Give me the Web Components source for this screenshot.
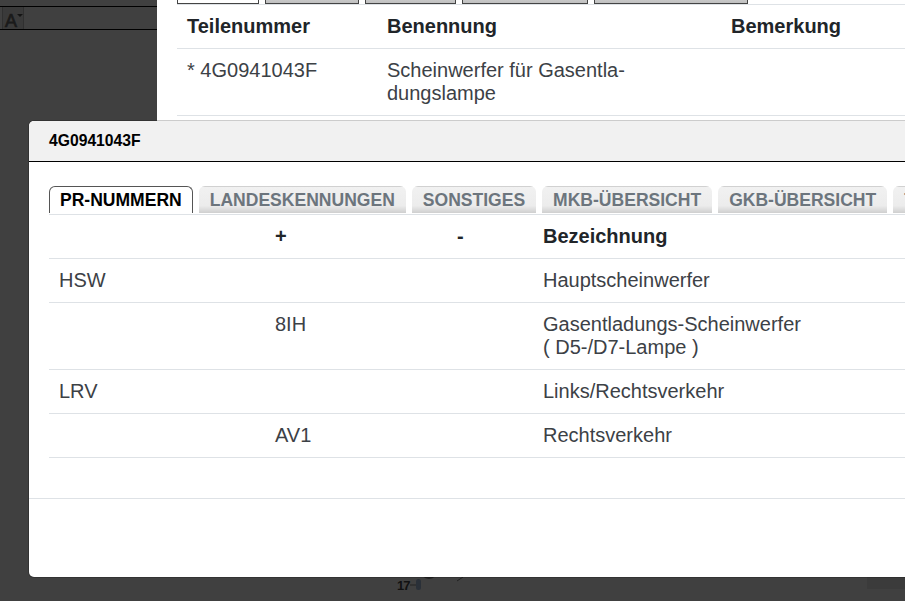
<!DOCTYPE html>
<html><head><meta charset="utf-8">
<style>
html,body{margin:0;padding:0;height:100%;overflow:hidden}
body{background:#404040;font-family:"Liberation Sans",Arial,sans-serif}
</style></head><body>
<template id="t-page"><style>
:host{display:grid;grid-template-columns:157px 1fr;grid-template-rows:121px 1fr;width:905px;height:601px;position:relative;overflow:hidden;background:#404040}
.main{background:#fff;padding:0 0 0 20px;overflow:hidden}
</style><app-toolbar></app-toolbar><div class="main"><slot name="main"></slot></div><slot name="decor"></slot><slot name="modal"></slot></template>

<template id="t-toolbar"><style>
:host{display:block}
.bar{margin-top:6px;height:22px;border-top:1px solid #000;border-bottom:1px solid #000;display:flex}
.btn{width:22px;height:22px;border:1px solid #303030;border-width:0 1px;margin-left:2px;background:#3a3a3a;position:relative;color:#1a1a1a;font:18px/28px "Liberation Sans",sans-serif;-webkit-text-stroke:.7px #1a1a1a;padding-left:2px;box-sizing:border-box}
.btn::after{content:"";position:absolute;left:14px;top:7px;border:3px solid transparent;border-top-color:#141414;border-bottom:0}
</style><div class="bar"><div class="btn">A</div></div></template>

<template id="t-toptabs"><style>
:host{display:flex;height:4px;overflow:hidden}
::slotted(*){height:8px;margin-top:-4px;box-sizing:border-box;border:1px solid #444;background:linear-gradient(#cfcfcf,#c0c0c0)}
::slotted(.on){background:#fff}
</style><slot></slot></template>

<template id="t-table"><style>
:host{display:block;font:20px/23px "Liberation Sans",Arial,sans-serif;color:#3c4146}
</style><slot></slot></template>

<template id="t-row"><style>
:host{display:grid;grid-template-columns:var(--cols);border-bottom:1px solid #dee2e6;box-sizing:border-box;padding:10px 0}
:host([head]){font-weight:bold;color:#212529}
::slotted(*){padding:0 10px;min-width:0}
</style><slot></slot></template>

<template id="t-modal"><style>
:host{display:block;position:absolute;left:29px;top:121px;width:1000px;height:456px;background:#fff;border-radius:5px;box-shadow:0 0 0 1px rgba(0,0,0,.2);overflow:hidden;color:#212529}
.head{height:41px;box-sizing:border-box;background:#f1f1f1;border-bottom:1px solid #000;padding:0 20px;font:bold 15.7px/39px "Liberation Sans",sans-serif;color:#000}
.body{padding:24px 20px 0;height:337px;box-sizing:border-box;border-bottom:1px solid #dee2e6}
</style><div class="head"><slot name="title"></slot></div><div class="body"><slot></slot></div></template>

<template id="t-tabs"><style>
:host{display:flex;gap:6px;height:29px;box-sizing:border-box;border-bottom:1px solid #dee2e6;white-space:nowrap}
</style><slot></slot></template>

<template id="t-tab"><style>
:host{display:block;height:27px;box-sizing:border-box;padding:0 10px;border:1px solid transparent;border-bottom:0;border-radius:6px 6px 0 0;font:bold 17.55px/26px "Liberation Sans",sans-serif;color:#6c757d;background:linear-gradient(#f1f1f1 0,#ececec 72%,#cfcfcf 100%);flex:none}
:host([active]){color:#000;background:#fff;border-color:#555}
</style><slot></slot></template>

<script>
function def(name,tpl){customElements.define(name,class extends HTMLElement{constructor(){super();this.attachShadow({mode:'open'}).appendChild(document.getElementById(tpl).content.cloneNode(true))}})}
def('app-page','t-page');def('app-toolbar','t-toolbar');def('top-tabs','t-toptabs');def('data-table','t-table');def('data-row','t-row');def('app-modal','t-modal');def('tab-bar','t-tabs');def('tab-item','t-tab');
</script>

<app-page>
 <div slot="main">
  <top-tabs>
   <span class="on" style="width:82px;margin-right:6px"></span><span style="width:94px;margin-right:6px"></span><span style="width:91px;margin-right:6px"></span><span style="width:126px;margin-right:6px"></span><span style="width:154px"></span>
  </top-tabs>
  <data-table style="--cols:200px 344px 1fr;border-top:1px solid #dee2e6">
   <data-row head><span>Teilenummer</span><span>Benennung</span><span>Bemerkung</span></data-row>
   <data-row><span>* 4G0941043F</span><span>Scheinwerfer für Gasentla-<br>dungslampe</span><span></span></data-row>
  </data-table>
 </div>
 <div slot="decor" style="position:absolute;left:397px;top:578px;font:bold 13px/15px 'Liberation Sans',sans-serif;color:#111;letter-spacing:-1px">17</div>
 <svg slot="decor" style="position:absolute;left:410px;top:565px" width="60" height="30" viewBox="0 0 60 30" fill="none"><path d="M-2 20H7" stroke="#222"/><rect x="6" y="14" width="5" height="11" rx="2.5" fill="#2a3038"/><circle cx="19" cy="5" r="9" fill="#222"/><path d="M47 16l6-4" stroke="#222"/></svg>
 <div slot="decor" style="position:absolute;left:867px;top:577px;width:38px;height:12px;background:#3b3b3b"></div>
 <app-modal slot="modal">
  <span slot="title">4G0941043F</span>
  <tab-bar>
   <tab-item active>PR-NUMMERN</tab-item><tab-item>LANDESKENNUNGEN</tab-item><tab-item>SONSTIGES</tab-item><tab-item>MKB-ÜBERSICHT</tab-item><tab-item>GKB-ÜBERSICHT</tab-item><tab-item>TYP</tab-item>
  </tab-bar>
  <data-table style="--cols:216px 182px 86px 1fr">
   <data-row head><span></span><span>+</span><span>-</span><span>Bezeichnung</span></data-row>
   <data-row><span>HSW</span><span></span><span></span><span>Hauptscheinwerfer</span></data-row>
   <data-row><span></span><span>8IH</span><span></span><span>Gasentladungs-Scheinwerfer<br>( D5-/D7-Lampe )</span></data-row>
   <data-row><span>LRV</span><span></span><span></span><span>Links/Rechtsverkehr</span></data-row>
   <data-row><span></span><span>AV1</span><span></span><span>Rechtsverkehr</span></data-row>
  </data-table>
 </app-modal>
</app-page>
</body></html>
